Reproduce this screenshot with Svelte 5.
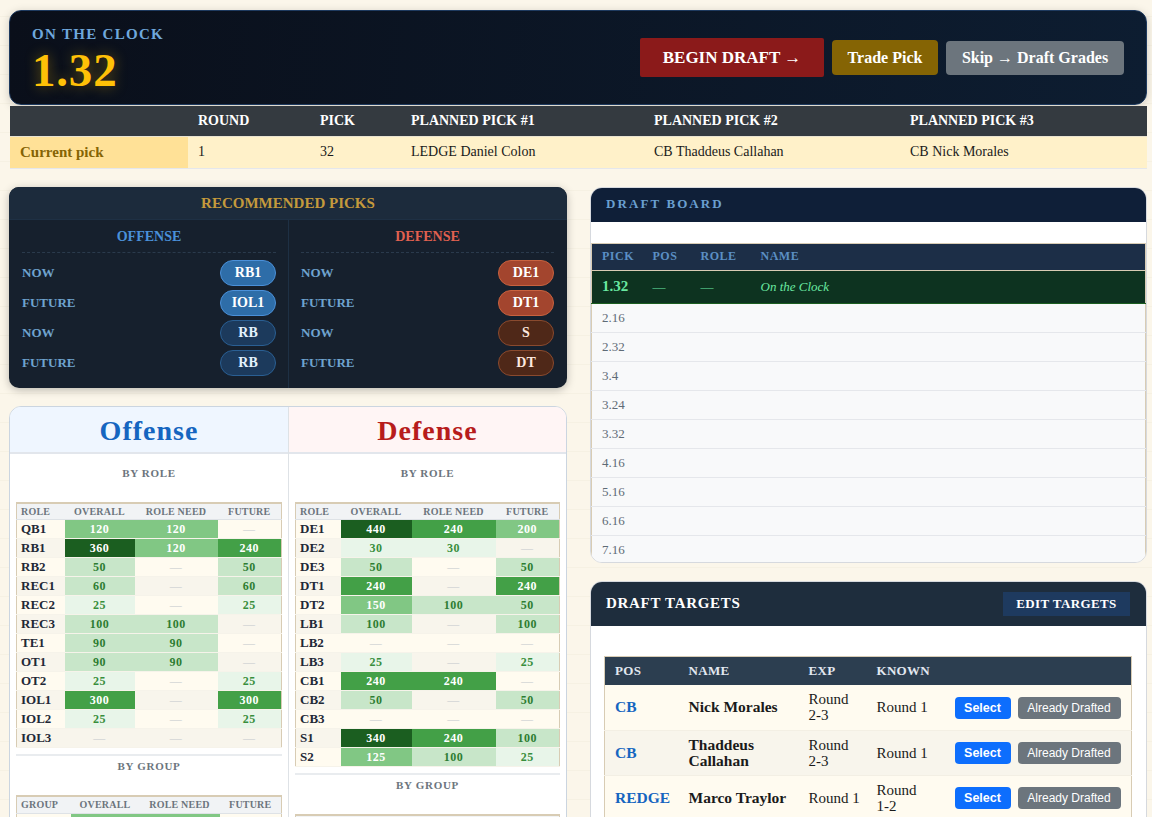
<script>
  const summary = [['1','32','LEDGE Daniel Colon','CB Thaddeus Callahan','CB Nick Morales']];
  const rec = [
    { side:'off', title:'OFFENSE', rows:[['NOW','RB1',1],['FUTURE','IOL1',1],['NOW','RB',0],['FUTURE','RB',0]] },
    { side:'def', title:'DEFENSE', rows:[['NOW','DE1',1],['FUTURE','DT1',1],['NOW','S',0],['FUTURE','DT',0]] },
  ];
  const lv = (v) => v === 0 ? 'e' : v >= 340 ? 'h5' : v >= 240 ? 'h4' : v >= 120 ? 'h3' : v >= 50 ? 'h2' : 'h1';
  const offense = [['QB1',120,120,0],['RB1',360,120,240],['RB2',50,0,50],['REC1',60,0,60],['REC2',25,0,25],['REC3',100,100,0],['TE1',90,90,0],['OT1',90,90,0],['OT2',25,0,25],['IOL1',300,0,300],['IOL2',25,0,25],['IOL3',0,0,0]];
  const defense = [['DE1',440,240,200],['DE2',30,30,0],['DE3',50,0,50],['DT1',240,0,240],['DT2',150,100,50],['LB1',100,0,100],['LB2',0,0,0],['LB3',25,0,25],['CB1',240,240,0],['CB2',50,0,50],['CB3',0,0,0],['S1',340,240,100],['S2',125,100,25]];
  const lvf = (v) => v >= 300 ? 'h4' : lv(v);
  const panels = [
    { key:'off', title:'Offense', rows:offense },
    { key:'def', title:'Defense', rows:defense },
  ];
  const board = ['2.16','2.32','3.4','3.24','3.32','4.16','5.16','6.16','7.16'];
  const targets = [
    ['CB','Nick Morales',['Round','2-3'],['Round 1']],
    ['CB','Thaddeus Callahan',['Round','2-3'],['Round 1']],
    ['REDGE','Marco Traylor',['Round 1'],['Round','1-2']],
  ];
</script>

<div class="page">
  <header class="hero">
    <div class="hero-left">
      <div class="clock-label">ON THE CLOCK</div>
      <div class="clock-pick">1.32</div>
    </div>
    <div class="hero-actions">
      <button class="begin">BEGIN DRAFT →</button>
      <button class="trade">Trade Pick</button>
      <button class="skip">Skip → Draft Grades</button>
    </div>
  </header>

  <table class="summary">
    <thead><tr><th class="c0"></th><th class="c1">ROUND</th><th class="c2">PICK</th><th class="c3">PLANNED PICK #1</th><th class="c4">PLANNED PICK #2</th><th>PLANNED PICK #3</th></tr></thead>
    <tbody>
      {#each summary as r}
        <tr><td class="cur">Current pick</td>{#each r as c}<td>{c}</td>{/each}</tr>
      {/each}
    </tbody>
  </table>

  <div class="columns">
    <div class="col">
      <section class="rec">
        <h2>RECOMMENDED PICKS</h2>
        <div class="rec-body">
          {#each rec as s}
            <div class="rec-col">
              <div class="rec-title {s.side}">{s.title}</div>
              {#each s.rows as [when, pos, strong]}
                <div class="rec-row">
                  <span>{when}</span>
                  <span class="pill {s.side}" class:strong={strong}>{pos}</span>
                </div>
              {/each}
            </div>
          {/each}
        </div>
      </section>

      <section class="grades">
        {#each panels as p}
          <div class="side {p.key}">
            <h2>{p.title}</h2>
            <div class="side-body">
              <h3 class="by-role">BY ROLE</h3>
              <table class="heat">
                <thead><tr><th>ROLE</th><th>OVERALL</th><th>ROLE NEED</th><th>FUTURE</th></tr></thead>
                <tbody>
                  {#each p.rows as [role, a, b, c]}
                    <tr>
                      <td class="role">{role}</td>
                      <td class={lv(a)}>{a || '—'}</td>
                      <td class={lvf(b)}>{b || '—'}</td>
                      <td class={lvf(c)}>{c || '—'}</td>
                    </tr>
                  {/each}
                </tbody>
              </table>
              <h3 class="by-group">BY GROUP</h3>
              <table class="heat group">
                {#if p.key === 'off'}
                  <thead><tr><th>GROUP</th><th>OVERALL</th><th>ROLE NEED</th><th>FUTURE</th></tr></thead>
                  <tbody><tr><td class="role"></td><td class="h3" colspan="2"></td><td class="e"></td></tr></tbody>
                {:else}
                  <thead><tr><th colspan="4"></th></tr></thead>
                {/if}
              </table>
            </div>
          </div>
        {/each}
      </section>
    </div>

    <div class="col">
      <section class="board">
        <h2>DRAFT BOARD</h2>
        <div class="strip"></div>
        <table>
          <thead><tr><th class="b1">PICK</th><th class="b2">POS</th><th class="b3">ROLE</th><th>NAME</th></tr></thead>
          <tbody>
            <tr class="now"><td class="pk">1.32</td><td>—</td><td>—</td><td class="otc">On the Clock</td></tr>
            {#each board as b}<tr><td>{b}</td><td></td><td></td><td></td></tr>{/each}
          </tbody>
        </table>
      </section>

      <section class="targets">
        <div class="targets-head">
          <h2>DRAFT TARGETS</h2>
          <button>EDIT TARGETS</button>
        </div>
        <div class="targets-body">
          <table>
            <thead><tr><th class="t1">POS</th><th class="t2">NAME</th><th class="t3">EXP</th><th class="t4">KNOWN</th><th></th></tr></thead>
            <tbody>
              {#each targets as [pos, name, exp, known]}
                <tr>
                  <td class="pos">{pos}</td>
                  <td class="name">{name}</td>
                  <td>{#each exp as line, i}{#if i}<br />{/if}{line}{/each}</td>
                  <td>{#each known as line, i}{#if i}<br />{/if}{line}{/each}</td>
                  <td class="acts"><button class="sel">Select</button><button class="drafted">Already Drafted</button></td>
                </tr>
              {/each}
            </tbody>
          </table>
        </div>
      </section>
    </div>
  </div>
</div>

<style>
  :global(html), :global(body) { margin: 0; height: 817px; overflow: hidden; }
  :global(body) {
    background-color: #fbf6ea;
    background-image: repeating-linear-gradient(180deg, transparent 0 16px, #f6f1e3 16px 17px, transparent 17px 29px);
  }
  * { box-sizing: border-box; }
  .page { padding: 10px 5px 0 9px; font-family: "Liberation Serif", serif; color: #1a1a1a; height: 817px; overflow: hidden; }
  h2, h3 { margin: 0; }
  button { border: 0; font-family: inherit; color: #fff; cursor: pointer; }
  table { border-collapse: collapse; width: 100%; table-layout: fixed; }
  th { text-align: left; font-weight: bold; padding: 0; }
  td { padding: 0; }

  .hero {
    height: 95px; display: flex; justify-content: space-between; align-items: center;
    padding: 0 22px; border-radius: 12px; border: 1px solid #1e3a5f;
    background: linear-gradient(95deg, #0a0f1a, #0d1d31);
    box-shadow: 0 2px 10px rgba(0,0,0,.18);
  }
  .hero-left { padding-top: 4px; }
  .clock-label { font-size: 15px; font-weight: bold; letter-spacing: 1.3px; color: #6fa8dc; line-height: 18px; }
  .clock-pick { font-size: 47px; font-weight: bold; letter-spacing: .8px; color: #ffc107; line-height: 48px; margin-top: 3px; text-shadow: 0 0 14px rgba(255,193,7,.4); }
  .hero-actions { display: flex; align-items: center; gap: 8px; }
  .begin { width: 184px; height: 39px; background: #8b1a1a; font-size: 17px; font-weight: bold; border-radius: 2px; }
  .trade { width: 106px; height: 35px; background: #856404; font-size: 16px; font-weight: bold; border-radius: 4px; }
  .skip { width: 178px; height: 34px; background: #6c757d; font-size: 16px; font-weight: bold; border-radius: 4px; }

  .summary { width: 1137px; margin: 1px 0 0 1px; font-size: 14px; }
  .summary th { background: #343a40; color: #fff; height: 30px; font-size: 14px; padding-left: 10px; }
  .summary .c0 { width: 178px; }
  .summary .c1 { width: 122px; }
  .summary .c2 { width: 91px; }
  .summary .c3 { width: 243px; }
  .summary .c4 { width: 256px; }
  .summary td { background: #fff1c9; height: 32px; padding-left: 10px; border-top: 1px solid #e8e2d0; border-bottom: 1px solid #e5e7eb; }
  .summary td.cur { background: #ffe197; color: #856404; font-weight: bold; font-size: 15px; }

  .columns { display: grid; grid-template-columns: 558px 557px; column-gap: 23px; margin-top: 18px; }
  .col { display: flex; flex-direction: column; }

  .rec { background: #16202d; border-radius: 10px; height: 201px; overflow: hidden; box-shadow: 0 2px 8px rgba(0,0,0,.25); }
  .rec h2 { height: 33px; line-height: 32px; text-align: center; background: #1c2b3c; color: #c49a3c; font-size: 15px; border-bottom: 1px solid #1e3044; }
  .rec-body { display: grid; grid-template-columns: 1fr 1fr; }
  .rec-col { padding: 0 12px 0 13px; height: 168px; }
  .rec-col + .rec-col { border-left: 1px solid #1e3044; padding: 0 13px 0 12px; }
  .rec-title { text-align: center; font-size: 14px; font-weight: bold; height: 33px; line-height: 33px; border-bottom: 1px dashed #2a3a4c; margin-bottom: 5px; }
  .rec-title.off { color: #4a90d9; }
  .rec-title.def { color: #e06050; }
  .rec-row { display: flex; justify-content: space-between; align-items: center; height: 30px; color: #6fa3cf; font-size: 13px; font-weight: bold; }
  .pill { width: 56px; height: 26px; line-height: 24px; text-align: center; border-radius: 13px; font-size: 14px; color: #fff; border: 1px solid; }
  .pill.off { background: #1c3a5c; border-color: #2a5f93; color: #e3f2fd; }
  .pill.off.strong { background: #2e6da8; border-color: #4a90d9; color: #fff; }
  .pill.def { background: #4f2818; border-color: #8a4a2e; color: #fde8df; }
  .pill.def.strong { background: #a3452e; border-color: #c8623f; color: #fff; }

  .grades { display: grid; grid-template-columns: 278px 1fr; margin-top: 18px; background: #fff; border: 1px solid #cbd5e0; border-radius: 12px; overflow: hidden; height: 520px; }
  .side + .side { border-left: 1px solid #dee2e6; }
  .side h2 { height: 47px; line-height: 48px; text-align: center; font-size: 28px; letter-spacing: 1px; border-bottom: 2px solid #e2e6ec; }
  .side.off h2 { background: #eff6ff; color: #1565c0; }
  .side.def h2 { background: #fff5f5; color: #b71c1c; }
  .side-body { padding: 0 6px; }
  h3 { text-align: center; font-size: 11px; letter-spacing: .7px; color: #6c757d; }
  .by-role { height: 48px; line-height: 38px; }
  .by-group { margin-top: 6px; border-top: 2px solid #e9ecef; height: 41px; line-height: 21px; }
  .heat { border: 1px solid #d8ccb4; border-top-width: 2px; font-size: 11px; }
  .heat th { height: 17px; background: #f1f3f5; color: #6c757d; font-size: 10px; letter-spacing: .2px; text-align: center; border-bottom: 1px solid #dee2e6; }
  .heat th:first-child { text-align: left; padding-left: 4px; width: 48px; }
  .off .heat th:nth-child(2) { width: 70px; }
  .off .heat th:nth-child(3) { width: 83px; }
  .def .heat th:first-child { width: 45px; }
  .def .heat th:nth-child(2) { width: 71px; }
  .def .heat th:nth-child(3) { width: 84px; }
  .off .heat.group th:first-child { width: 54px; }
  .off .heat.group th:nth-child(2) { width: 69px; }
  .off .heat.group th:nth-child(3) { width: 80px; }
  .def .heat.group th:first-child { width: auto; }
  .heat td { height: 19px; text-align: center; font-weight: bold; font-size: 12px; letter-spacing: .5px; border-bottom: 1px solid #f6f3ea; }
  .heat tr:nth-child(odd) td { background-color: #fffbf0; }
  .heat tr:nth-child(even) td { background-color: #f8f5ec; }
  .heat td.role { text-align: left; padding-left: 4px; font-size: 13px; letter-spacing: 0; color: #1f2937; }
  .heat tr td.h5 { background: #1b5e20; color: #fff; }
  .heat tr td.h4 { background: #43a047; color: #fff; }
  .heat tr td.h3 { background: #81c784; color: #fff; }
  .heat tr td.h2 { background: #c8e6c9; color: #2e7d32; }
  .heat tr td.h1 { background: #e8f5e9; color: #388e3c; }
  .heat td.e { color: #c4c8cc; font-weight: normal; }

  .board { height: 376px; background: #fff; border: 1px solid #d6d9de; border-radius: 12px; overflow: hidden; }
  .board h2 { height: 34px; line-height: 32px; background: #0f1f38; color: #6a9fd0; font-size: 13px; letter-spacing: 2.1px; padding-left: 15px; }
  .strip { height: 21px; }
  .board table { font-size: 13px; border: 1px solid #d8ccb4; }
  .board th { background: #1c2e47; color: #5b8fc4; height: 27px; font-size: 12px; letter-spacing: .5px; padding-left: 10px; border-bottom: 1px solid #d8ccb4; }
  .b1 { width: 51px; }
  .b2 { width: 48px; }
  .b3 { width: 60px; }
  .board td { height: 29px; padding-left: 10px; background: #f8f9fa; color: #5f6b76; border-bottom: 1px solid #e5e7eb; }
  .board .now td { height: 33px; background: #0d3320; color: #69e8a0; border-bottom: 1px solid #1b5e20; }
  .board .pk { font-weight: bold; font-size: 15px; }
  .board .otc { font-style: italic; }

  .targets { margin-top: 18px; background: #fff; border: 1px solid #d6d9de; border-radius: 12px; overflow: hidden; height: 300px; }
  .targets-head { height: 44px; background: #1e2d3d; display: flex; justify-content: space-between; align-items: center; padding: 0 16px 0 15px; }
  .targets-head h2 { color: #fff; font-size: 15px; letter-spacing: .7px; }
  .targets-head button { width: 127px; height: 24px; background: #1e3a5f; font-weight: bold; font-size: 13px; letter-spacing: .4px; }
  .targets-body { padding: 30px 14px 0 13px; }
  .targets table { border: 1px solid #d8ccb4; font-size: 15px; }
  .targets th { height: 29px; background: #2c3e50; color: #e2e8f0; font-size: 13px; letter-spacing: .3px; padding-left: 10px; }
  .t1 { width: 74px; }
  .t2 { width: 120px; }
  .t3 { width: 68px; }
  .t4 { width: 88px; }
  .targets td { height: 45px; padding-left: 10px; line-height: 16px; border-bottom: 1px solid #f3efe4; background: #fffbf0; }
  .targets tr:nth-child(even) td { background: #f8f5ec; }
  .targets .pos { color: #1565c0; font-weight: bold; font-size: 15.5px; }
  .targets .name { font-weight: bold; font-size: 15.5px; }
  .targets td.acts { padding: 1px 0 0 0; white-space: nowrap; }
  .acts button { height: 22px; border-radius: 4px; font-family: "Liberation Sans", sans-serif; padding: 0; vertical-align: middle; }
  .sel { width: 56px; background: #0d6efd; font-weight: bold; font-size: 12.5px; }
  .drafted { width: 103px; background: #6c757d; margin-left: 7px; font-size: 12px; }
</style>
